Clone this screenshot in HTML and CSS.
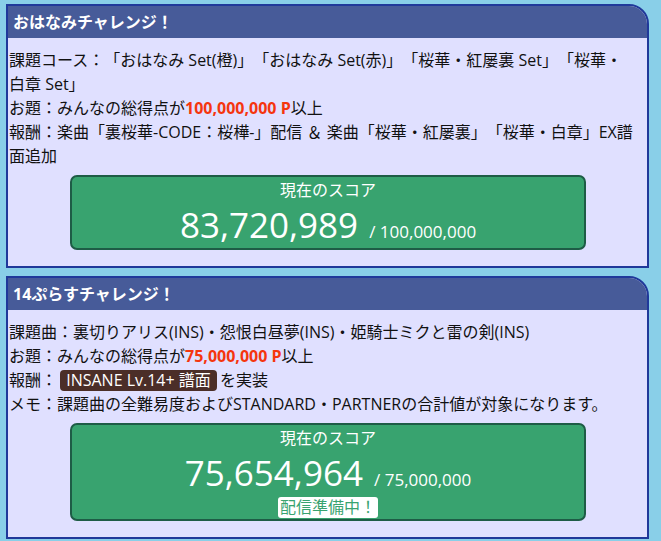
FILE: index.html
```html
<!DOCTYPE html>
<html lang="ja">
<head>
<meta charset="utf-8">
<link rel="stylesheet" href="styles.css">
</head>
<body>
<section class="card">
  <h2 class="card-title">おはなみチャレンジ！</h2>
  <div class="card-body">
    <p class="line">課題コース：「おはなみ Set(橙)」「おはなみ Set(赤)」「桜華・紅屡裏 Set」「桜華・<span class="nowrap">白章 Set」</span></p>
    <p class="line">お題：みんなの総得点が<span class="goal">100,000,000 P</span>以上</p>
    <p class="line">報酬：楽曲「裏桜華-CODE：桜樺-」配信 ＆ 楽曲「桜華・紅屡裏」「桜華・白章」EX譜面追加</p>
    <div class="score">
      <div class="score-label">現在のスコア</div>
      <div class="score-value">83,720,989 <span class="score-target">/ 100,000,000</span></div>
    </div>
  </div>
</section>
<section class="card">
  <h2 class="card-title">14ぷらすチャレンジ！</h2>
  <div class="card-body">
    <p class="line">課題曲：裏切りアリス(INS)・怨恨白昼夢(INS)・姫騎士ミクと雷の剣(INS)</p>
    <p class="line">お題：みんなの総得点が<span class="goal">75,000,000 P</span>以上</p>
    <p class="line">報酬： <span class="tag">INSANE Lv.14+ 譜面</span> を実装</p>
    <p class="line">メモ：課題曲の全難易度およびSTANDARD・PARTNERの合計値が対象になります。</p>
    <div class="score">
      <div class="score-label">現在のスコア</div>
      <div class="score-value">75,654,964 <span class="score-target">/ 75,000,000</span></div>
      <div class="score-status"><span class="status">配信準備中！</span></div>
    </div>
  </div>
</section>
</body>
</html>
```
FILE: styles.css
```css
html, body {
  margin: 0;
  padding: 0;
}
body {
  background: #89cfe8;
  padding: 4px 0 0 6px;
  font-family: "Open Sans", "Noto Sans CJK JP", sans-serif;
  font-size: 16px;
  color: #111;
  text-spacing-trim: space-all;
}
.card {
  width: 639px;
  border: 2px solid #20399a;
  border-top-right-radius: 20px;
  background: #e0e0ff;
  margin-bottom: 8px;
  overflow: hidden;
}
.card-title {
  margin: 0;
  height: 32px;
  line-height: 32px;
  padding-left: 5px;
  background: #475b99;
  color: #fff;
  font-size: 16px;
  font-weight: bold;
}
.card-body {
  padding: 10px 0 16px 1px;
}
.line {
  margin: 0;
  line-height: 24px;
}
.nowrap {
  white-space: nowrap;
}
.goal {
  color: #f5350e;
  font-weight: bold;
}
.tag {
  display: inline-block;
  background: #4b2e28;
  color: #fff;
  border-radius: 4px;
  padding: 0 6px;
  margin: 0 -1px;
  line-height: 21px;
}
.score {
  width: 512px;
  margin: 7px auto 0;
  border: 2px solid #1e5c46;
  border-radius: 7px;
  background: #38a36f;
  color: #fff;
  text-align: center;
}
.score-label {
  line-height: 24px;
  padding-top: 1px;
}
.score-value {
  font-size: 35px;
  line-height: 46px;
  height: 46px;
}
.score-target {
  font-size: 17px;
  line-height: 1;
  margin-left: 2px;
}
.score-status {
  line-height: 21px;
  height: 21px;
  padding: 1px 0;
}
.status {
  display: inline-block;
  vertical-align: top;
  background: #fff;
  color: #38a36f;
  border-radius: 3px;
  padding: 0 2px;
  line-height: 21px;
}
```
